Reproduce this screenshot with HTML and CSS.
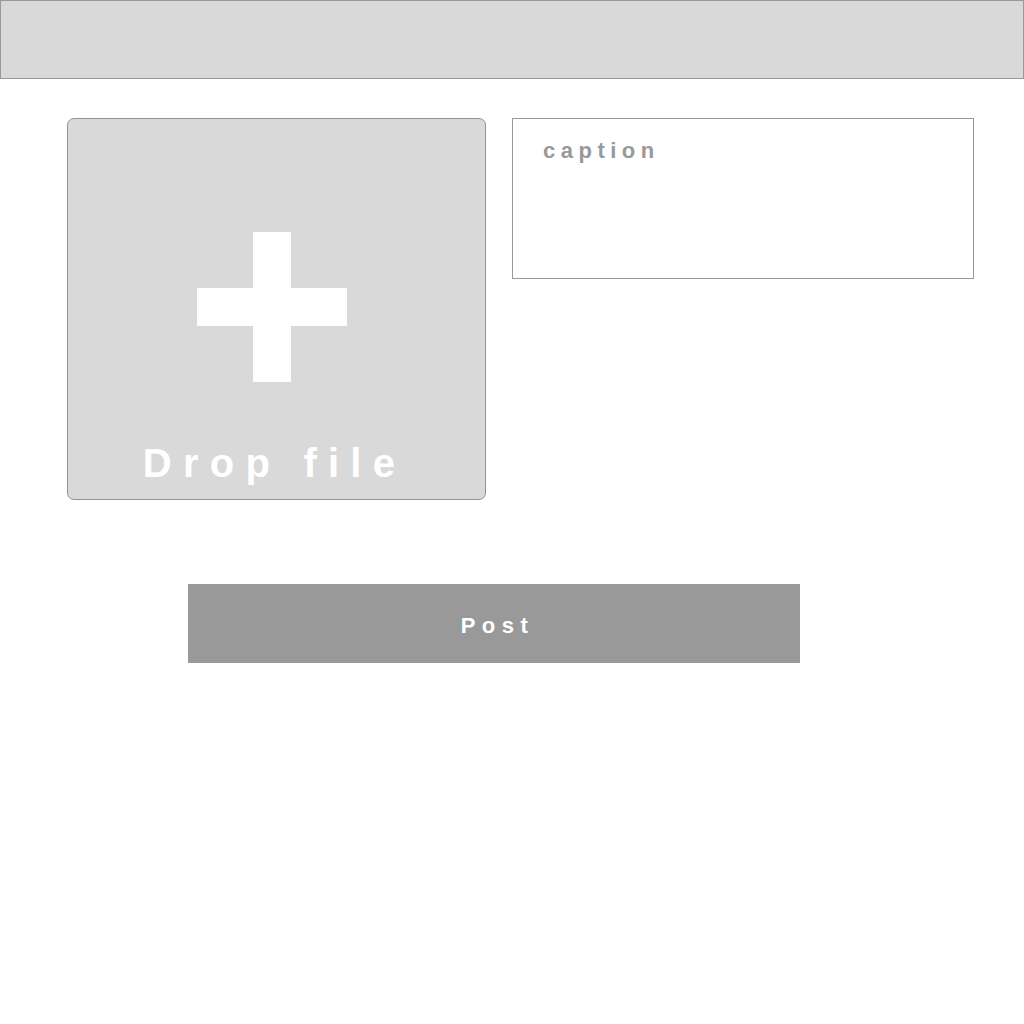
FILE: index.html
```html
<!DOCTYPE html>
<html>
<head>
<meta charset="utf-8">
<link rel="stylesheet" href="styles.css">
</head>
<body>
<header class="topbar"></header>
<main class="content">
  <div class="row">
    <div class="dropzone">
      <svg class="plus" width="150" height="150" viewBox="0 0 150 150">
        <rect x="56" y="0" width="38" height="150" fill="#fff"/>
        <rect x="0" y="56" width="150" height="38" fill="#fff"/>
      </svg>
      <div class="drop-label">Drop file</div>
    </div>
    <div class="caption-box">
      <span class="caption-placeholder">caption</span>
    </div>
  </div>
  <button class="post-btn">Post</button>
</main>
</body>
</html>
```
FILE: styles.css
```css
* { box-sizing: border-box; }
html, body { margin: 0; padding: 0; background: #fff; }
body { font-family: "Liberation Sans", Arial, sans-serif; }

.topbar {
  height: 79px;
  background: #d9d9d9;
  border: 1px solid #999;
}

.content {
  padding-left: 67px;
}

.row {
  display: flex;
  gap: 26px;
  margin-top: 39px;
  align-items: flex-start;
}

.dropzone {
  width: 419px;
  height: 382px;
  background: #d9d9d9;
  border: 1px solid #939393;
  border-radius: 7px;
  display: flex;
  flex-direction: column;
  align-items: center;
  padding-top: 113px;
}

.plus {
  display: block;
  margin-right: 9px;
}

.drop-label {
  margin-top: 61px;
  margin-right: 4px;
  font-size: 40px;
  line-height: 40px;
  font-weight: bold;
  color: #fff;
  letter-spacing: 11.25px;
  white-space: nowrap;
}

.caption-box {
  width: 462px;
  height: 161px;
  border: 1px solid #999;
  background: #fff;
  padding: 19px 30px;
}

.caption-placeholder {
  font-size: 22px;
  font-weight: bold;
  color: #999;
  letter-spacing: 5.5px;
}

.post-btn {
  display: flex;
  align-items: center;
  justify-content: center;
  margin-top: 84px;
  margin-left: 121px;
  width: 612px;
  height: 79px;
  border: none;
  background: #999;
  color: #fff;
  font-family: "Liberation Sans", Arial, sans-serif;
  font-size: 22px;
  font-weight: bold;
  letter-spacing: 6.5px;
  padding: 4px 0 0 7px;
}
```
